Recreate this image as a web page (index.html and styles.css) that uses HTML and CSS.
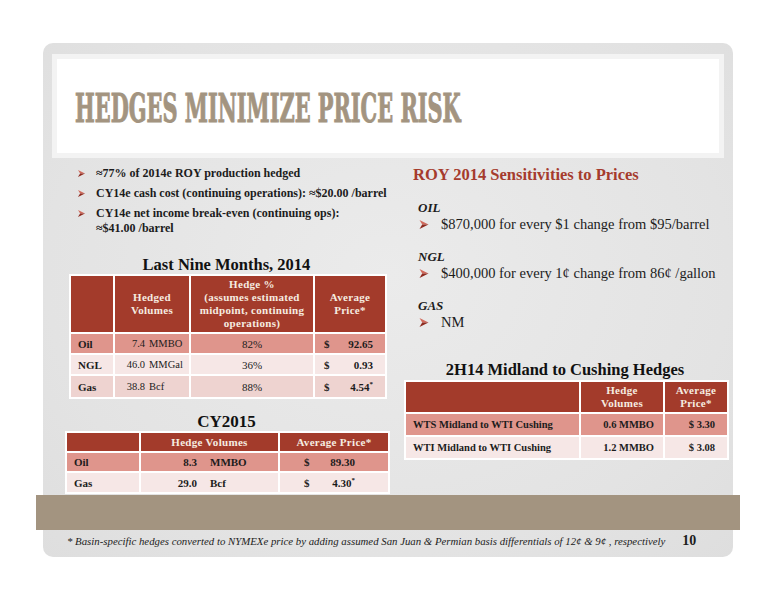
FILE: index.html
```html
<!DOCTYPE html>
<html lang="en">
<head>
  <meta charset="UTF-8" />
  <title>Hedges Minimize Price Risk</title>
  <link rel="stylesheet" href="styles.css">
</head>
<body>

  <div class="slide">
    <div class="title-box">
      <h1><span>HEDGES MINIMIZE PRICE RISK</span></h1>
    </div>

    <div class="content">
      <div class="col-left">
        <ul class="bullets">
          <li><svg class="arrow" viewBox="0 0 10 10"><polygon points="0,0 10,5 3,5" fill="#d26a5c"/><polygon points="0,10 10,5 3,5" fill="#8e2b20"/></svg><span>≈77% of 2014e ROY production hedged</span></li>
          <li><svg class="arrow" viewBox="0 0 10 10"><polygon points="0,0 10,5 3,5" fill="#d26a5c"/><polygon points="0,10 10,5 3,5" fill="#8e2b20"/></svg><span>CY14e cash cost (continuing operations): ≈$20.00 /barrel</span></li>
          <li><svg class="arrow" viewBox="0 0 10 10"><polygon points="0,0 10,5 3,5" fill="#d26a5c"/><polygon points="0,10 10,5 3,5" fill="#8e2b20"/></svg><span>CY14e net income break-even (continuing ops):<br>≈$41.00 /barrel</span></li>
        </ul>

        <h2 class="tbl-title first">Last Nine Months, 2014</h2>
        <table class="t1">
          <colgroup><col style="width:44px"><col style="width:76px"><col style="width:124px"><col style="width:72px"></colgroup>
          <tr class="head">
            <th></th>
            <th>Hedged<br>Volumes</th>
            <th>Hedge %<br>(assumes estimated<br>midpoint, continuing<br>operations)</th>
            <th>Average<br>Price*</th>
          </tr>
          <tr class="dark">
            <td class="label">Oil</td>
            <td class="vol"><span class="num">7.4</span><span class="unit">MMBO</span></td>
            <td class="pct">82%</td>
            <td><div class="price"><span>$</span><span>92.65</span></div></td>
          </tr>
          <tr class="light">
            <td class="label">NGL</td>
            <td class="vol"><span class="num">46.0</span><span class="unit">MMGal</span></td>
            <td class="pct">36%</td>
            <td><div class="price"><span>$</span><span>0.93</span></div></td>
          </tr>
          <tr class="mid">
            <td class="label">Gas</td>
            <td class="vol"><span class="num">38.8</span><span class="unit">Bcf</span></td>
            <td class="pct">88%</td>
            <td><div class="price"><span>$</span><span>4.54<sup>*</sup></span></div></td>
          </tr>
        </table>

        <h2 class="tbl-title second">CY2015</h2>
        <table class="t2">
          <colgroup><col style="width:74px"><col style="width:139px"><col style="width:110px"></colgroup>
          <tr class="head">
            <th></th>
            <th>Hedge Volumes</th>
            <th>Average Price*</th>
          </tr>
          <tr class="dark">
            <td class="label">Oil</td>
            <td class="vol"><span class="num">8.3</span><span class="unit">MMBO</span></td>
            <td><div class="price"><span>$</span><span>89.30</span></div></td>
          </tr>
          <tr class="light">
            <td class="label">Gas</td>
            <td class="vol"><span class="num">29.0</span><span class="unit">Bcf</span></td>
            <td><div class="price"><span>$</span><span>4.30<sup>*</sup></span></div></td>
          </tr>
        </table>
      </div>

      <div class="col-right">
        <h2 class="sens-title">ROY 2014 Sensitivities to Prices</h2>

        <div class="sens">
          <h3>OIL</h3>
          <p><svg class="arrow" viewBox="0 0 10 10"><polygon points="0,0 10,5 3,5" fill="#d26a5c"/><polygon points="0,10 10,5 3,5" fill="#8e2b20"/></svg>$870,000 for every $1 change from $95/barrel</p>
        </div>
        <div class="sens">
          <h3>NGL</h3>
          <p><svg class="arrow" viewBox="0 0 10 10"><polygon points="0,0 10,5 3,5" fill="#d26a5c"/><polygon points="0,10 10,5 3,5" fill="#8e2b20"/></svg>$400,000 for every 1¢ change from 86¢ /gallon</p>
        </div>
        <div class="sens">
          <h3>GAS</h3>
          <p><svg class="arrow" viewBox="0 0 10 10"><polygon points="0,0 10,5 3,5" fill="#d26a5c"/><polygon points="0,10 10,5 3,5" fill="#8e2b20"/></svg>NM</p>
        </div>

        <h2 class="tbl-title third">2H14 Midland to Cushing Hedges</h2>
        <table class="t3">
          <colgroup><col style="width:175px"><col style="width:84px"><col style="width:64px"></colgroup>
          <tr class="head">
            <th></th>
            <th>Hedge<br>Volumes</th>
            <th>Average<br>Price*</th>
          </tr>
          <tr class="dark">
            <td class="label">WTS Midland to WTI Cushing</td>
            <td class="right">0.6 MMBO</td>
            <td class="right">$ 3.30</td>
          </tr>
          <tr class="light">
            <td class="label">WTI Midland to WTI Cushing</td>
            <td class="right">1.2 MMBO</td>
            <td class="right">$ 3.08</td>
          </tr>
        </table>
      </div>
    </div>

    <div class="band"></div>

    <div class="footer">
      <span class="footnote">* Basin-specific hedges converted to NYMEXe price by adding assumed San Juan &amp; Permian basis differentials of 12¢ &amp; 9¢ , respectively</span>
      <span class="page-num">10</span>
    </div>
  </div>

</body>
</html>
```

FILE: styles.css
```css
* {
  box-sizing: border-box;
}

body {
  margin: 0;
  background: #fff;
  font-family: "Liberation Serif", "DejaVu Serif", serif;
  color: #1c1c1c;
}

.slide {
  width: 690px;
  height: 514px;
  margin: 43px 0 0 43px;
  padding-top: 11px;
  border-radius: 10px;
  background: radial-gradient(ellipse at 50% 45%, #ebebeb 0%, #e3e3e3 70%, #dedede 100%);
}

/* title */
.title-box {
  margin: 0 9px;
  height: 104px;
  padding: 29px 0 0 18px;
  background: #fff;
  border: 5px solid #f3f3f3;
}

.title-box h1 {
  margin: 0;
  font-family: "DejaVu Serif", serif;
  font-stretch: condensed;
  font-weight: bold;
  font-size: 40px;
  line-height: 40px;
  color: #a39480;
  white-space: nowrap;
}

.title-box h1 span {
  display: inline-block;
  transform: scaleX(0.58);
  transform-origin: left center;
  -webkit-text-stroke: 1px #a39480;
}

/* two columns */
.content {
  display: grid;
  grid-template-columns: 323px 324px;
  column-gap: 15px;
  height: 332px;
  padding-left: 22px;
}

.arrow {
  flex: none;
}

.bullets {
  list-style: none;
  margin: 8px 0 0;
  padding: 0;
  font-size: 12px;
  font-weight: bold;
  line-height: 15px;
}

.bullets li {
  display: flex;
  align-items: flex-start;
  margin-bottom: 5px;
}

.bullets li:last-child {
  margin-bottom: 0;
}

.bullets .arrow {
  width: 7px;
  height: 7px;
  margin: 4px 11px 0 13px;
}

.tbl-title {
  margin: 0;
  font-size: 16.5px;
  line-height: 18px;
  font-weight: bold;
  text-align: center;
  color: #111;
}

.tbl-title.first {
  margin-top: 20px;
}

.tbl-title.second {
  margin-top: 14px;
  font-size: 17px;
}

.tbl-title.third {
  margin-top: 29px;
  font-size: 16.5px;
  line-height: 20px;
}

/* right column */
.sens-title {
  margin: 7px 0 0 10px;
  font-size: 16.5px;
  line-height: 20px;
  color: #a53b2d;
}

.sens {
  margin: 16px 0 0 15px;
}

.sens:first-of-type {
  margin-top: 15px;
}

.sens h3 {
  margin: 0;
  font-size: 13px;
  font-style: italic;
  line-height: 16px;
}

.sens p {
  display: flex;
  align-items: center;
  margin: 0;
  font-size: 14.5px;
  line-height: 17px;
}

.sens .arrow {
  width: 10px;
  height: 9px;
  margin: 0 12px 0 1px;
}

/* tables */
table {
  border-collapse: collapse;
  table-layout: fixed;
  font-size: 11px;
}

th, td {
  border: 2px solid #fff;
  padding: 0 7px;
  white-space: nowrap;
}

th {
  background: #a33b2b;
  color: #f6ece0;
  font-weight: bold;
  line-height: 13px;
  letter-spacing: 0.3px;
  text-align: center;
}

td {
  font-weight: bold;
}

tr.dark td {
  background: #df958c;
}

tr.mid td {
  background: #eed3d0;
}

tr.light td {
  background: #f6e7e6;
}

.t1 {
  width: 316px;
  margin-left: 4px;
}

.t1 .head {
  height: 58px;
}

.t1 tr.dark, .t1 tr.light {
  height: 21px;
}

.t1 tr.mid {
  height: 23px;
}

.t1 .vol {
  padding: 0;
  font-size: 10.5px;
  font-weight: normal;
}

.t1 .num {
  display: inline-block;
  width: 30px;
  text-align: right;
}

.t1 .unit {
  margin-left: 4px;
}

.pct {
  text-align: center;
  font-weight: normal;
}

.price {
  display: flex;
  justify-content: space-between;
}

.t1 .price {
  padding: 0 5px 0 2px;
}

.t2 {
  width: 323px;
}

.t2 .head {
  height: 20px;
}

.t2 tr.dark {
  height: 20px;
}

.t2 tr.light {
  height: 21px;
}

.t2 .vol {
  padding: 0;
}

.t2 .num {
  display: inline-block;
  width: 56px;
  text-align: right;
}

.t2 .unit {
  margin-left: 13px;
}

.t2 .price {
  padding: 0 26px 0 17px;
}

sup {
  font-size: 7px;
  line-height: 0;
}

.t3 {
  width: 323px;
  margin-left: 1px;
}

.t3 td {
  font-size: 10.5px;
}

.t3 .head {
  height: 32px;
}

.t3 tr.dark, .t3 tr.light {
  height: 23px;
}

.t3 .right {
  text-align: right;
  padding-right: 9px;
}

.t3 td:last-child {
  padding-right: 12px;
}

/* bottom */
.band {
  height: 35px;
  margin: 5px -7px 0;
  background: #a39480;
}

.footer {
  display: flex;
  align-items: center;
  height: 14px;
  margin-top: 4px;
  padding-left: 24px;
}

.footnote {
  font-size: 10.8px;
  font-style: italic;
  color: #222;
}

.page-num {
  margin-left: 17px;
  font-size: 14px;
  font-weight: bold;
}
```
